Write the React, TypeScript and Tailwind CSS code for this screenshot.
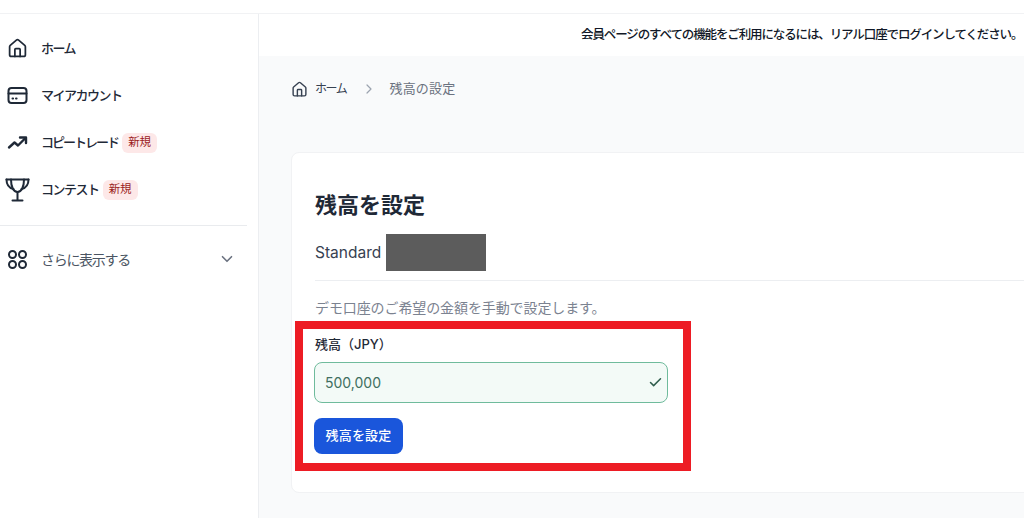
import { Check, ChevronDown, ChevronRight, House } from "lucide-react";

const font = { fontFamily: '"Inter", "Noto Sans CJK JP", sans-serif' };

function CardIcon() {
  return (
    <svg width="21" height="21" viewBox="0 0 21 21" fill="none" stroke="#1f2937" strokeWidth="2" strokeLinecap="round">
      <rect x="1.5" y="3" width="18" height="15" rx="3" />
      <path d="M1.5 8.5h18" />
      <path d="M5.5 13.5h.6M9 13.5h.6" />
    </svg>
  );
}

function TrendIcon() {
  return (
    <svg width="21" height="21" viewBox="0 0 21 21" fill="none" stroke="#1f2937" strokeWidth="2.4" strokeLinecap="round" strokeLinejoin="round">
      <path d="M2 15.5l5.5-5 3.5 3 7-7" />
      <path d="M13 5.5h6v5.5" />
    </svg>
  );
}

function TrophyIcon() {
  return (
    <svg width="25" height="25" viewBox="0 0 25 25" fill="none" stroke="#1f2937" strokeWidth="2" strokeLinecap="round" strokeLinejoin="round">
      <path d="M1.5 2.500h22" />
      <path d="M1.500 2.500c0 5 2.500 8.500 7 9.500M23.500 2.500c0 5-2.500 8.500-7 9.500" />
      <path d="M6 2.500c0 7.500 2.500 12.500 6.500 12.500S19 10 19 2.500" />
      <path d="M12.500 15v8M7.500 23.500h10" />
    </svg>
  );
}

function GridIcon() {
  return (
    <svg width="21" height="21" viewBox="0 0 21 21" fill="none" stroke="#1f2937" strokeWidth="2">
      <circle cx="5.500" cy="5.500" r="3.500" />
      <circle cx="15.500" cy="5.500" r="3.500" />
      <circle cx="5.500" cy="15.500" r="3.500" />
      <circle cx="15.500" cy="15.500" r="3.500" />
    </svg>
  );
}

function NewBadge() {
  return (
    <span className="ml-[4px] flex h-[20px] w-[35px] items-center justify-center rounded-[6px] bg-[#fde8e8] text-[11.5px] tracking-[-0.2px] text-[#9b1c1c]">
      新規
    </span>
  );
}

function NavItem({ icon, label, badge, tight }: { icon: React.ReactNode; label: string; badge?: boolean; tight?: boolean }) {
  return (
    <div className="flex h-[47px] items-center">
      <span className="flex w-[41px] justify-center pr-[7px]">{icon}</span>
      <span className={tight ? "text-[13px] font-medium tracking-[-2px] text-[#1f2937]" : "text-[13px] font-medium tracking-[-1.5px] text-[#1f2937]"}>
        {label}
      </span>
      {badge && <NewBadge />}
    </div>
  );
}

export default function App() {
  return (
    <div className="relative h-[518px] w-[1024px] overflow-hidden bg-white" style={font}>
      <div className="h-[14px] border-b border-[#f1f2f4]" />
      <div className="flex h-[504px]">
        {/* Sidebar */}
        <aside className="w-[259px] shrink-0 border-r border-[#eceef1] pt-[11px]">
          <NavItem icon={<House size={21} strokeWidth={2} className="text-[#1f2937]" />} label="ホーム" />
          <NavItem icon={<CardIcon />} label="マイアカウント" />
          <NavItem icon={<TrendIcon />} label="コピートレード" badge tight />
          <NavItem icon={<TrophyIcon />} label="コンテスト" badge />
          <div className="mt-[12px] mr-[11px] border-t border-[#e9ebee]" />
          <div className="flex h-[66px] items-center pr-[22px]">
            <span className="flex w-[41px] justify-center pr-[7px]">
              <GridIcon />
            </span>
            <span className="flex-1 text-[14px] tracking-[-1.3px] text-[#4b5563]">さらに表示する</span>
            <ChevronDown size={18} strokeWidth={2.2} className="text-[#6b7280]" />
          </div>
        </aside>

        {/* Main */}
        <main className="min-w-0 flex-1 bg-[#f9fafb]">
          <div className="flex h-[42px] items-center bg-white pl-[322px]">
            <span className="text-[12.5px] font-medium tracking-[-1.12px] whitespace-nowrap text-[#111827]">
              会員ページのすべての機能をご利用になるには、リアル口座でログインしてください。
            </span>
          </div>
          <div className="flex h-[66px] items-center pl-[32px]">
            <House size={17} strokeWidth={2} className="text-[#374151]" />
            <span className="ml-[7px] text-[12px] tracking-[-1.4px] text-[#374151]">ホーム</span>
            <ChevronRight size={16} strokeWidth={1.8} className="mr-[12px] ml-[15px] text-[#9ca3af]" />
            <span className="text-[13px] tracking-[0.2px] text-[#6b7280]">残高の設定</span>
          </div>

          {/* Card */}
          <section className="mt-[30px] ml-[32px] h-[341px] w-[800px] rounded-l-[8px] border border-[#f1f2f4] bg-white pt-[36px] pl-[22px]">
            <h1 className="ml-[1px] text-[22px] leading-[32px] font-semibold text-[#1f2937]">残高を設定</h1>
            <div className="mt-[13px] ml-[1px] flex h-[37px] items-center">
              <span className="text-[15.5px] text-[#374151]">Standard</span>
              <div className="ml-[5px] h-[37px] w-[100px] bg-[#5c5c5c]" />
            </div>
            <div className="mt-[9px] ml-[1px] border-t border-[#eceef1]" />
            <p className="mt-[17px] ml-[1px] text-[14px] leading-[20px] tracking-[-0.1px] text-[#7b8290]">
              デモ口座のご希望の金額を手動で設定します。
            </p>
            <label className="mt-[16px] ml-[1px] block text-[13px] leading-[20px] font-medium text-[#1f2937]">残高（JPY）</label>
            <div className="mt-[8px] flex h-[41px] w-[354px] items-center justify-between rounded-[8px] border border-[#6fbb9c] bg-[#f3faf7] pr-[4px] pl-[10px]">
              <span className="text-[14px] text-[#3f6f5f]">500,000</span>
              <Check size={15} strokeWidth={2.4} className="text-[#2f5d4d]" />
            </div>
            <button className="mt-[15px] h-[36px] w-[89px] rounded-[8px] bg-[#1a56db] text-[13px] font-medium tracking-[0.2px] text-white">
              残高を設定
            </button>
          </section>
        </main>
      </div>

      {/* Annotation box over the screenshot */}
      <div className="absolute top-[321px] left-[295px] h-[150px] w-[396px] border-[8px] border-[#ed1c24]" />
    </div>
  );
}
